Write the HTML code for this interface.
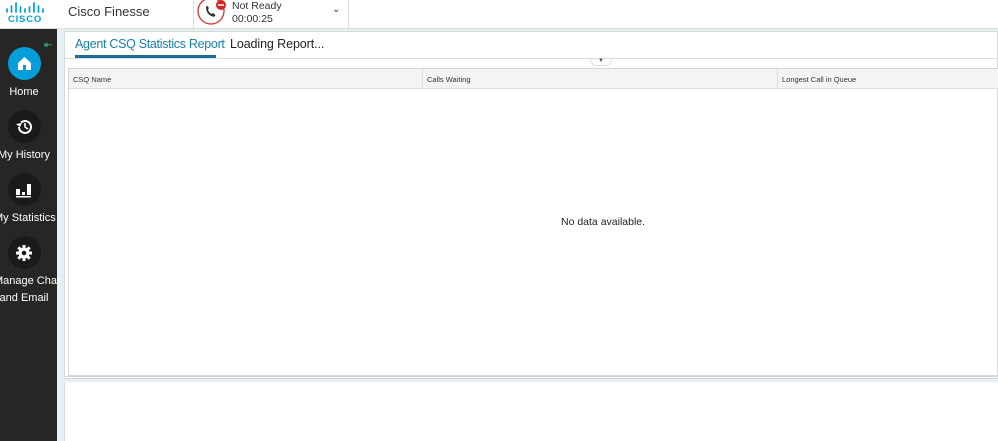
<!DOCTYPE html>
<html><head><style>
body{margin:0;width:998px;height:441px;overflow:hidden;background:#e6f0f2;font-family:"Liberation Sans",sans-serif;position:relative}
.a{position:absolute}
.lbl{position:absolute;color:#fff;font-size:11px;width:60px;text-align:center;left:-6px;white-space:nowrap}
.circ{position:absolute;left:8px;width:33px;height:33px;border-radius:50%;background:#1a1a1a}
</style></head><body>
<div class="a" style="left:0;top:0;width:998px;height:28px;background:#fff;border-bottom:1px solid #ddd"></div>
<svg class="a" style="left:5px;top:2px" width="42" height="22">
<g stroke="#049fd9" stroke-width="1.7" stroke-linecap="round">
<line x1="2" y1="7" x2="2" y2="10"/><line x1="6.5" y1="4" x2="6.5" y2="10"/><line x1="11" y1="1" x2="11" y2="10"/><line x1="15.5" y1="5" x2="15.5" y2="10"/><line x1="20" y1="7" x2="20" y2="10"/><line x1="24.5" y1="5" x2="24.5" y2="10"/><line x1="29" y1="1" x2="29" y2="10"/><line x1="33.5" y1="4" x2="33.5" y2="10"/><line x1="38" y1="7" x2="38" y2="10"/></g>
<text x="20" y="20" font-size="9.5" font-weight="bold" fill="#049fd9" text-anchor="middle" letter-spacing="0.8" font-family="Liberation Sans">CISCO</text></svg>
<div class="a" style="left:68px;top:4px;font-size:13px;color:#333">Cisco Finesse</div>
<div class="a" style="left:193px;top:0;width:154px;height:28px;border-left:1px solid #ddd;border-right:1px solid #ddd"></div>
<svg class="a" style="left:196px;top:0" width="34" height="26"><circle cx="15" cy="11" r="13" fill="none" stroke="#c33" stroke-width="1.3"/><path d="M10 7 q0 8 8 10 l1.5-2 -2.5-2 -1.5 1 q-3-2-3.5-4.5 l1-1.5 -2-2.5z" fill="#333"/><circle cx="25" cy="5" r="5" fill="#d22"/><rect x="22" y="4.3" width="6" height="1.5" fill="#fff"/></svg>
<div class="a" style="left:232px;top:0;font-size:10.5px;color:#333;line-height:13px">Not Ready<br>00:00:25</div>
<div class="a" style="left:332px;top:4px;font-size:10px;color:#333">&#8964;</div>
<div class="a" style="left:0;top:29px;width:57px;height:412px;background:#262626"></div>
<div class="a" style="left:44px;top:40px;color:#2ec48a;font-size:10px">&#8676;</div>
<div class="circ" style="top:47px;background:#049fd9"></div>
<svg class="a" style="left:16px;top:55px" width="17" height="17"><path d="M2 8 L8.5 2 L15 8 V15 H2Z" fill="#fff"/><rect x="7" y="10" width="3" height="5" fill="#049fd9"/></svg>
<div class="lbl" style="top:86px">Home</div>
<div class="circ" style="top:110px"></div>
<svg class="a" style="left:14px;top:117px" width="20" height="20"><path d="M5 10 a6 6 0 1 0 2-4.5" fill="none" stroke="#fff" stroke-width="2"/><path d="M2 7 l4 3 2-4z" fill="#fff"/><path d="M11 6 v4 l3 2" fill="none" stroke="#fff" stroke-width="1.6"/></svg>
<div class="lbl" style="top:149px">My History</div>
<div class="circ" style="top:173px"></div>
<svg class="a" style="left:15px;top:181px" width="18" height="18"><rect x="1" y="8" width="4" height="6" fill="#fff"/><rect x="7" y="11" width="3" height="3" fill="#fff"/><rect x="12" y="3" width="4" height="11" fill="#fff"/><rect x="1" y="15" width="15" height="1.5" fill="#fff"/></svg>
<div class="lbl" style="top:212px">My Statistics</div>
<div class="circ" style="top:236px"></div>
<svg class="a" style="left:14px;top:243px" width="20" height="20"><g stroke="#fff" stroke-width="3"><line x1="10" y1="2" x2="10" y2="18"/><line x1="2" y1="10" x2="18" y2="10"/><line x1="4.3" y1="4.3" x2="15.7" y2="15.7"/><line x1="15.7" y1="4.3" x2="4.3" y2="15.7"/></g><circle cx="10" cy="10" r="5.5" fill="#fff"/><circle cx="10" cy="10" r="2.3" fill="#1a1a1a"/></svg>
<div class="lbl" style="top:275px">Manage Chat</div>
<div class="lbl" style="top:292px">and Email</div>
<div class="a" style="left:64px;top:31px;width:934px;height:348px;background:#fff;border:1px solid #d6dadb;box-sizing:border-box;border-bottom:3px double #d0d4d5"></div>
<div class="a" style="left:75px;top:37px;font-size:12.5px;color:#1a7fa8;letter-spacing:-0.3px">Agent CSQ Statistics Report</div>
<div class="a" style="left:75px;top:55px;width:141px;height:3px;background:#1a6e93"></div>
<div class="a" style="left:230px;top:37px;font-size:12.5px;color:#222;letter-spacing:-0.1px">Loading Report...</div>
<div class="a" style="left:64px;top:58px;width:934px;height:1px;background:#ddd"></div>
<div class="a" style="left:590px;top:59px;width:20px;height:6px;border:1px solid #ddd;border-top:none;border-radius:0 0 8px 8px;font-size:6px;text-align:center;color:#555;line-height:5px">&#9660;</div>
<div class="a" style="left:68px;top:68px;width:932px;height:308px;border:1px solid #d6d6d6;box-sizing:border-box"></div>
<div class="a" style="left:69px;top:69px;width:929px;height:19px;background:#f4f4f4;border-bottom:1px solid #ddd"></div>
<div class="a" style="left:422px;top:69px;width:1px;height:19px;background:#ddd"></div>
<div class="a" style="left:777px;top:69px;width:1px;height:19px;background:#ddd"></div>
<div class="a" style="left:73px;top:75px;font-size:7.5px;color:#333">CSQ Name</div>
<div class="a" style="left:427px;top:75px;font-size:7.5px;color:#333">Calls Waiting</div>
<div class="a" style="left:782px;top:75px;font-size:7.5px;color:#333">Longest Call in Queue</div>
<div class="a" style="left:561px;top:216px;font-size:10.5px;color:#222">No data available.</div>
<div class="a" style="left:64px;top:382px;width:934px;height:59px;background:#fff;border-left:1px solid #d6dadb"></div>
</body></html>
